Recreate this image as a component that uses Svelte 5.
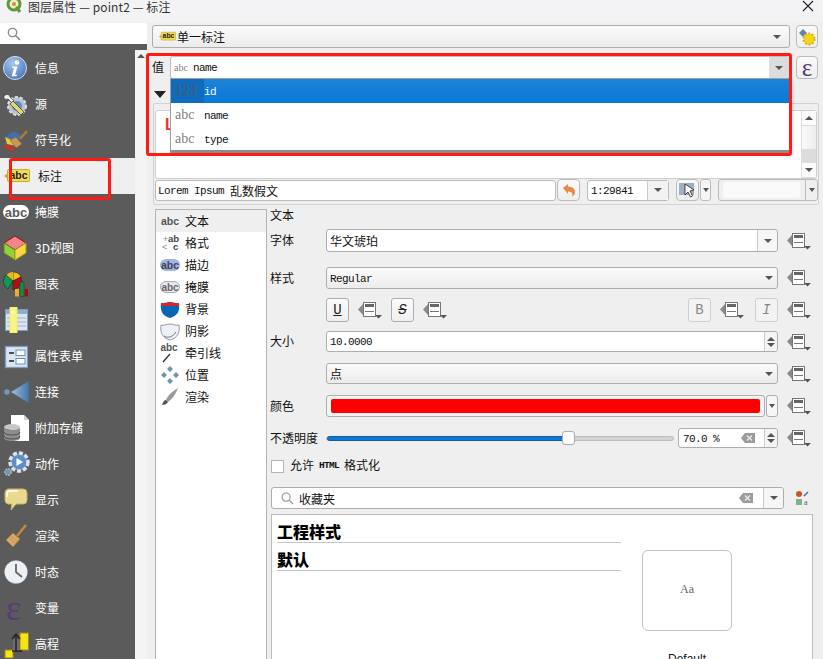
<script>
const nav = [
  ['信息','info'],['源','source'],['符号化','symbol'],['标注','label'],['掩膜','mask'],['3D视图','cube'],
  ['图表','chart'],['字段','fields'],['属性表单','form'],['连接','join'],['附加存储','store'],['动作','action'],
  ['显示','display'],['渲染','render'],['时态','clock'],['变量','var'],['高程','elev']
];
const icons = {
  info:`<svg width="26" height="26" viewBox="0 0 26 26"><defs><radialGradient id="ib" cx=".4" cy=".3" r=".8"><stop offset="0" stop-color="#a9c8ec"/><stop offset="1" stop-color="#3b70b5"/></radialGradient></defs><circle cx="13" cy="13" r="11.5" fill="url(#ib)" stroke="#cfdff2"/><circle cx="15" cy="7.5" r="2.3" fill="#fff"/><path d="M10.5 11.5h5l-2.4 8.2h2l-.6 1.6H9.600l2.400-8.200h-2z" fill="#fff"/></svg>`,
  source:`<svg width="26" height="26" viewBox="0 0 26 26"><circle cx="15" cy="15" r="9" fill="#b9c3cc" stroke="#d8dde2" stroke-width="2" stroke-dasharray="3 2"/><circle cx="15" cy="15" r="5" fill="#5b8ec4"/><path d="M2 5c3-3 6-1 6 1l4 4-2 2-4-4C4 9 1 8 2 5z" fill="#eee" stroke="#333" stroke-width=".7"/><path d="M11 10l11 11-3 3L8 13z" fill="#e8d36a" stroke="#333" stroke-width=".7"/></svg>`,
  symbol:`<svg width="28" height="26" viewBox="0 0 28 26"><path d="M3 10l9-6 9 6-9 4z" fill="#3f6fb0"/><path d="M3 10l9 4 2 5-9-2z" fill="#e8c93c"/><path d="M2 17l8 2 3 6-10-4z" fill="#c8342c"/><path d="M14 21l-6-8 6-3 6 7z" fill="#c89858" stroke="#7d5a2a" stroke-width=".6"/><path d="M18 12l7-8" stroke="#b07a30" stroke-width="2.400"/></svg>`,
  label:`<svg width="26" height="16" viewBox="0 0 26 16"><path d="M0 8l4-3v6z" fill="#c9a93a"/><rect x="3.500" y="1.500" width="22" height="12" rx="1" fill="#f2dc4c" stroke="#c9a93a"/><text x="14.500" y="11" text-anchor="middle" font-family="Liberation Sans" font-weight="700" font-size="10.500" fill="#222">abc</text></svg>`,
  mask:`<svg width="28" height="18" viewBox="0 0 28 18"><rect x="1" y="2" width="26" height="14" rx="7" fill="#fff"/><text x="14" y="13.500" text-anchor="middle" font-family="Liberation Sans" font-weight="700" font-size="13" fill="#5b5b5b">abc</text></svg>`,
  cube:`<svg width="26" height="28" viewBox="0 0 26 28"><path d="M13 2l11 7-11 7L2 9z" fill="#f0858a" stroke="#a01010"/><path d="M2 9l11 7v10L2 19z" fill="#93d13c" stroke="#5a8a10"/><path d="M24 9l-11 7v10l11-7z" fill="#f5d84a" stroke="#b89a10"/></svg>`,
  chart:`<svg width="26" height="26" viewBox="0 0 26 26"><path d="M11 10V1a8.500 8.500 0 0 1 8 5z" fill="#f2c422" stroke="#222" stroke-width=".6"/><path d="M11 10L4 5a8.500 8.500 0 0 1 7-4z" fill="#e8b820"/><path d="M11 10L4 4a9 9 0 0 0 2 14z" fill="#0c9a54" stroke="#222" stroke-width=".6"/><path d="M11 10l8-4a9 9 0 0 1-6 12l-2 1z" fill="#b01010" stroke="#222" stroke-width=".6"/><rect x="13" y="18" width="4" height="7.500" fill="#eab022"/><rect x="18" y="11" width="4" height="14.500" fill="#1a8a4a" stroke="#222" stroke-width=".4"/><rect x="22.500" y="18" width="3.500" height="7.500" fill="#a01010"/></svg>`,
  fields:`<svg width="26" height="26" viewBox="0 0 26 26"><rect x="3.500" y="2.500" width="22" height="21" fill="#dbe4ef" stroke="#7d9cc0"/><rect x="4" y="3" width="21" height="4" fill="#8fadcf"/><path d="M5 11h19M5 15h19M5 19h19" stroke="#9db5d0"/><rect x="8" y="0" width="7" height="26" fill="#f8f48c" stroke="#f4ee50"/><rect x="10" y="4" width="2" height="1.500" fill="#fff"/></svg>`,
  form:`<svg width="26" height="26" viewBox="0 0 26 26"><rect x="3.500" y="3.500" width="22" height="21" fill="#dbe4ef" stroke="#7d9cc0" stroke-width="1.300"/><rect x="14" y="7" width="9" height="5.500" fill="#fff" stroke="#6b8fb8"/><rect x="14" y="15.500" width="9" height="5.500" fill="#fff" stroke="#6b8fb8"/><path d="M7 10h5M7 18h5" stroke="#44505c" stroke-width="2"/></svg>`,
  join:`<svg width="28" height="26" viewBox="0 0 28 26"><defs><linearGradient id="jb" x1="0" x2="1"><stop offset="0" stop-color="#a4c0dd"/><stop offset="1" stop-color="#3f73ab"/></linearGradient></defs><circle cx="5" cy="13" r="2.800" fill="#6d95c0"/><path d="M9 13L27 2v22z" fill="url(#jb)"/></svg>`,
  store:`<svg width="28" height="28" viewBox="0 0 28 28"><path d="M9 1h13l5 5v21H9z" fill="#fff"/><path d="M22 1v5h5" fill="#cfcfcf"/><ellipse cx="10" cy="13" rx="8" ry="3" fill="#c7c7c7"/><path d="M2 13v11c0 4 16 4 16 0V13c0 4-16 4-16 0z" fill="#8d8d8d"/><path d="M2 18c0 4 16 4 16 0M2 22c0 4 16 4 16 0" stroke="#333" fill="none" stroke-width=".7"/></svg>`,
  action:`<svg width="28" height="26" viewBox="0 0 28 26"><circle cx="17" cy="11" r="9" fill="#5d8fc7" stroke="#e2e2e2" stroke-width="3.500" stroke-dasharray="4 2"/><path d="M14.500 7v8l6.500-4z" fill="#fff"/><circle cx="6" cy="21" r="3.300" fill="#6d95c0" stroke="#d4d4d4" stroke-dasharray="2 1"/></svg>`,
  display:`<svg width="26" height="24" viewBox="0 0 26 24"><path d="M6 1h15a4 4 0 0 1 4 4v7a4 4 0 0 1-4 4H14l-5 6 1-6H6a4 4 0 0 1-3-4V5a4 4 0 0 1 3-4z" fill="#ead98f" stroke="#c8b866"/><path d="M5 9V6a3 3 0 0 1 3-3h8" stroke="#fff" fill="none" stroke-width="1.500"/></svg>`,
  render:`<svg width="26" height="26" viewBox="0 0 26 26"><path d="M15 13l9-11" stroke="#c98a3c" stroke-width="2.400"/><path d="M4 17l7-7 7 6-7 8z" fill="#d8a86c" stroke="#a87838"/><path d="M7 15l7 6M9 13l7 6" stroke="#b98a4c" stroke-width=".7"/></svg>`,
  clock:`<svg width="26" height="26" viewBox="0 0 26 26"><circle cx="14" cy="13" r="11.500" fill="#eef1f4" stroke="#7fa3cf" stroke-dasharray="2 3"/><path d="M14 5v8l6 5" fill="none" stroke="#666" stroke-width="1.800"/></svg>`,
  var:`<span class="eps big">ε</span>`,
  elev:`<svg width="28" height="28" viewBox="0 0 28 28"><rect x="18" y="3" width="8.500" height="17" fill="#f7e318" stroke="#a08a10"/><rect x="3" y="20" width="8" height="8" fill="#f7e318" stroke="#a08a10"/><path d="M14 5v16M10 9l4-5 4 5M10 21h10" fill="none" stroke="#222" stroke-width="1.300"/><path d="M12 9v12M16 9v12" stroke="#888" stroke-width=".8"/></svg>`
};
const sections = [
  ['文本','text'],['格式','fmt'],['描边','buf'],['掩膜','mk'],['背景','bg'],['阴影','sh'],['牵引线','call'],['位置','pos'],['渲染','rend']
];
const sIcons = {
  text:`<svg width="20" height="14"><text x="10" y="11" text-anchor="middle" font-family="Liberation Sans" font-weight="700" font-size="10.500" fill="#555">abc</text></svg>`,
  fmt:`<svg width="20" height="18"><text x="3" y="8" font-family="Liberation Sans" font-size="9" fill="#888">+</text><text x="8" y="8" font-family="Liberation Sans" font-weight="700" font-size="9.500" fill="#444">ab</text><text x="2" y="16" font-family="Liberation Sans" font-size="9" fill="#888">&lt;</text><text x="13" y="16" font-family="Liberation Sans" font-weight="700" font-size="9.500" fill="#444">c</text></svg>`,
  buf:`<svg width="20" height="14"><rect y="1" width="20" height="12" rx="6" fill="#9db4ee"/><text x="10" y="11" text-anchor="middle" font-family="Liberation Sans" font-weight="700" font-size="10.500" fill="#444">abc</text></svg>`,
  mk:`<svg width="20" height="14"><rect x=".5" y="1.500" width="19" height="11" rx="5.500" fill="#e8e8ee" stroke="#aab"/><text x="10" y="11" text-anchor="middle" font-family="Liberation Sans" font-weight="700" font-size="10" fill="#666">abc</text></svg>`,
  bg:`<svg width="20" height="20" viewBox="0 0 20 20"><path d="M1 4c3 1 6-1 9-1s6 2 9 1c1 7-1 13-9 15C2 17 0 11 1 4z" fill="#0a66b4"/><path d="M1 4c3 1 6-1 9-1s6 2 9 1l0 3H1z" fill="#d8242c"/></svg>`,
  sh:`<svg width="20" height="20" viewBox="0 0 20 20"><path d="M1 4c3 1 6-1 9-1s6 2 9 1c1 7-1 13-9 15C2 17 0 11 1 4z" fill="#eef0fa" stroke="#9a9a9a"/><path d="M4 15c3 2 8 2 12-4" stroke="#777" fill="none"/></svg>`,
  call:`<svg width="20" height="22"><text x="9" y="9" text-anchor="middle" font-family="Liberation Sans" font-weight="700" font-size="10" fill="#555">abc</text><path d="M3 20l7-8" stroke="#333" stroke-width="1.300"/></svg>`,
  pos:`<svg width="20" height="20" viewBox="0 0 20 20" fill="#6f93ac"><path d="M10 1l3 3-3 3-3-3zM10 13l3 3-3 3-3-3zM1 10l3-3 3 3-3 3zM13 10l3-3 3 3-3 3z"/></svg>`,
  rend:`<svg width="20" height="20" viewBox="0 0 20 20"><path d="M18 1C13 4 8 8 6 13l2 2C12 12 16 7 18 1z" fill="#9a9a9a"/><path d="M6 13c-2 0-3 2-4 5 3 0 5-1 6-3z" fill="#555"/></svg>`
};
</script>

{#snippet dd()}
  <svg class="dd" width="24" height="18" viewBox="0 0 24 18">
    <path d="M5 3v11L0 8.500z" fill="#8a8a8a"/>
    <rect x="5.500" y="1.500" width="12" height="14" fill="#fff" stroke="#777"/>
    <rect x="7" y="3" width="9" height="3" fill="#666"/>
    <path d="M7 10.500h9" stroke="#777"/>
    <path d="M17 14h7l-3.500 3.500z" fill="#555"/>
  </svg>
{/snippet}
{#snippet arrow()}<i class="arrow"></i>{/snippet}
{#snippet spin()}
  <span class="spin"><i class="up"></i><i class="down"></i></span>
{/snippet}
{#snippet clear()}
  <svg class="clear" width="14" height="10" viewBox="0 0 14 10"><path d="M4 0h10v10H4L0 5z" fill="#9c9c9c"/><path d="M6 2.500l5 5M11 2.500l-5 5" stroke="#eee" stroke-width="1.200"/></svg>
{/snippet}

<div class="window">
  <header class="title">
    <svg width="18" height="14" viewBox="0 0 18 14"><circle cx="9" cy="4" r="6" fill="#f0eecb" stroke="#5c9a3c" stroke-width="3"/><circle cx="9" cy="4" r="2" fill="#e08a2c"/><path d="M11 7l4 5" stroke="#5c9a3c" stroke-width="3"/></svg>
    <span class="title-text">图层属性 — point2 — 标注</span>
    <svg class="close" width="12" height="12" viewBox="0 0 12 12"><path d="M1 1l10 10M11 1L1 11" stroke="#222" stroke-width="1.100"/></svg>
  </header>

  <div class="body">
    <aside>
      <div class="search">
        <svg width="14" height="14" viewBox="0 0 14 14"><circle cx="5.500" cy="5.500" r="4.200" fill="none" stroke="#888" stroke-width="1.300"/><path d="M8.500 8.500l4.500 4.500" stroke="#888" stroke-width="1.500"/></svg>
      </div>
      <div class="strip"></div>
      <div class="navwrap">
        <nav>
          {#each nav as [name, icon]}
            <div class="nav-item" class:active={icon === 'label'}>
              <span class="nav-icon">{@html icons[icon]}</span>
              <span class="nav-label">{name}</span>
            </div>
          {/each}
        </nav>
        <div class="vscroll"><i class="up"></i></div>
      </div>
    </aside>

    <main>
      <div class="row1">
        <div class="combo grad wide">
          {@html icons.label.replace('width="26" height="16"','width="17" height="11"')}
          <span class="txt">单一标注</span>
          {@render arrow()}
        </div>
        <button class="tool" aria-label="settings">
          <svg width="18" height="18" viewBox="0 0 18 18"><path d="M5 1l4 4-4 4-4-4z" fill="#5f86a8"/><circle cx="11" cy="11" r="5.500" fill="#f3d520" stroke="#d8b410" stroke-width="2" stroke-dasharray="2 1.500"/></svg>
        </button>
      </div>

      <div class="row2">
        <span class="zhi">值</span>
        <div class="combo value">
          <span class="abc small">abc</span><span class="mono nm">name</span>
          <span class="valarrow">{@render arrow()}</span>
        </div>
        <button class="tool" aria-label="expression"><span class="eps">ε</span></button>
      </div>

      <div class="row3"><i class="collapse"></i></div>

      <section class="preview">
        <div class="pvbox">
          <div class="pvtext"><span class="redtext">Lorem</span></div>
          <div class="pvscroll">
            <span class="sb"><i class="up"></i></span>
            <span class="sbtrack"></span>
            <span class="sbthumb"></span>
            <span class="sb"><i class="down"></i></span>
          </div>
        </div>
        <div class="pvrow">
          <div class="input lorem"><span class="mono">Lorem Ipsum</span><span class="cjk gap">乱数假文</span></div>
          <button class="tool small undo" aria-label="reset">
            <svg width="14" height="14" viewBox="0 0 14 14"><path d="M1 5l5-4v2.500c5 0 7 3 7 5.500 0 2-1 3.500-3 4.500 1-2 .5-5-4-5V11z" fill="#e98a4a"/></svg>
          </button>
          <div class="scale"><span class="mono">1:29841</span><span class="scalearrow">{@render arrow()}</span></div>
          <button class="tool small cursor" aria-label="pick">
            <svg width="18" height="16" viewBox="0 0 18 16"><rect x="0" y="1" width="15" height="12" fill="#9db0c4"/><path d="M6 2l9 6-4 1 2.500 5-2 1-2.500-5-3 3z" fill="#fff" stroke="#222" stroke-width=".8"/></svg>
          </button>
          <span class="mini">{@render arrow()}</span>
          <div class="blank"><span></span><em>{@render arrow()}</em></div>
        </div>
      </section>

      <div class="split">
        <div class="list">
          {#each sections as [name, icon], i}
            <div class="list-item" class:sel={i === 0}>
              <span class="list-icon">{@html sIcons[icon]}</span><span class="list-label">{name}</span>
            </div>
          {/each}
        </div>

        <div class="panel">
          <div class="heading">文本</div>
          <div class="f h23 m6"><label>字体</label><div class="combo white field"><span class="txt">华文琥珀</span><span class="endarrow">{@render arrow()}</span></div>{@render dd()}</div>
          <div class="f h22 m15"><label>样式</label><div class="combo grad field"><span class="mono">Regular</span>{@render arrow()}</div>{@render dd()}</div>
          <div class="f h24 m9"><label></label>
            <button class="fmt"><u class="mono2">U</u></button>{@render dd()}
            <button class="fmt s"><s class="mono2">S</s></button>{@render dd()}
            <span class="grow"></span>
            <button class="fmt off"><span class="mono2">B</span></button>{@render dd()}
            <button class="fmt off it"><em class="mono2">I</em></button>{@render dd()}
          </div>
          <div class="f h21 m9"><label>大小</label><div class="combo white field sp"><span class="mono">10.0000</span>{@render spin()}</div>{@render dd()}</div>
          <div class="f h21 m11"><label></label><div class="combo grad field"><span class="txt">点</span>{@render arrow()}</div>{@render dd()}</div>
          <div class="f h22 m11"><label>颜色</label><div class="field colorwrap"><div class="colorbtn"><span class="red"></span></div><span class="colorarrow">{@render arrow()}</span></div>{@render dd()}</div>
          <div class="f h20 m11"><label>不透明度</label>
            <div class="field op">
              <div class="slider"><span class="fill"></span><span class="thumb"></span></div>
              <div class="combo white opinput"><span class="mono">70.0 %</span><span class="grow"></span>{@render clear()}{@render spin()}</div>
            </div>{@render dd()}</div>
          <div class="check"><span class="box"></span><span class="cjk">允许</span><span class="mono html">HTML</span><span class="cjk">格式化</span></div>
          <div class="f h22 searchrow">
            <div class="combo white sfield">
              <svg width="13" height="13" viewBox="0 0 14 14"><circle cx="5.500" cy="5.500" r="4.400" fill="none" stroke="#999" stroke-width="1.200"/><path d="M8.500 8.500l4.500 4.500" stroke="#999" stroke-width="1.400"/></svg>
              <span class="txt">收藏夹</span><span class="grow"></span>{@render clear()}
              <span class="endarrow">{@render arrow()}</span>
            </div>
            <svg class="styleicon" width="14" height="16" viewBox="0 0 14 16"><circle cx="4" cy="4" r="3" fill="#c8562a"/><rect x="1" y="9" width="6" height="6" fill="#7fb08a"/><path d="M9 6l4-4" stroke="#4a6f9a" stroke-width="1.500"/><text x="9" y="15" font-family="Liberation Serif" font-size="8" fill="#555">a</text></svg>
          </div>
          <div class="gallery">
            <div class="groups">
              <h3>工程样式</h3>
              <h3 class="second">默认</h3>
            </div>
            <div class="card-col">
              <div class="card">Aa</div>
              <div class="cardname">Default</div>
            </div>
          </div>
        </div>
      </div>
    </main>
  </div>

  <div class="popup">
    <div class="opt sel"><span class="abc cell">123</span><span class="mono">id</span></div>
    <div class="opt"><span class="abc">abc</span><span class="mono">name</span></div>
    <div class="opt"><span class="abc">abc</span><span class="mono">type</span></div>
  </div>
  <div class="mark mark-a"></div>
  <div class="mark mark-b"></div>
</div>

<style>
:global(body){margin:0;background:#efefef;}
.window{position:relative;width:823px;height:659px;overflow:hidden;background:#efefef;font-family:"Noto Sans CJK SC","Liberation Sans",sans-serif;font-size:12px;color:#111;}
i,em{font-style:normal;}
.title{height:22px;box-sizing:border-box;background:#f3f3f5;display:flex;align-items:flex-start;padding:0 0 0 5px;gap:5px;overflow:hidden;}
.title-text{line-height:16px;height:16px;color:#333;font-size:12px;letter-spacing:.1px;margin-top:-1px;}
.close{margin:0 9px 0 auto;}
.body{display:flex;height:637px;}
aside{width:147px;flex:none;display:flex;flex-direction:column;}
.search{height:21px;margin-top:1px;background:#fff;display:flex;align-items:center;padding-left:7px;border-radius:2px;}
.strip{height:6px;background:#5b5b5b;}
.navwrap{flex:1;display:flex;min-height:0;}
nav{width:135px;background:#5b5b5b;overflow:hidden;flex:none;}
.vscroll{flex:1;background:#f4f4f4;display:flex;justify-content:center;padding-top:4px;box-sizing:border-box;}
.nav-item{height:36px;display:flex;align-items:center;color:#fff;padding-left:2px;}
.nav-item.active{background:#efefef;color:#111;}
.nav-icon{width:33px;flex:none;display:flex;align-items:center;}
.nav-icon :global(svg){display:block;}
.nav-label{font-size:12px;margin-top:-2px;}
.active .nav-label{margin-left:3px;}
.active .nav-icon{padding-left:2px;box-sizing:border-box;}
.nav-icon :global(.eps.big){font-family:"Liberation Serif",serif;font-size:36px;color:#5a3a78;line-height:26px;margin-left:4px;}
main{flex:1;min-width:0;padding:3px 5px 0 5px;display:flex;flex-direction:column;}
.up,.down{display:block;width:0;height:0;border-left:4px solid transparent;border-right:4px solid transparent;}
.up{border-bottom:4px solid #555;}
.down{border-top:4px solid #555;}
.row1{display:flex;gap:6px;height:23px;}
.combo{box-sizing:border-box;border:1px solid #adadad;border-radius:3px;display:flex;align-items:center;position:relative;}
.grad{background:linear-gradient(#fbfbfb,#ececec);}
.white{background:#fff;}
.wide{width:638px;padding:0 8px 0 6px;gap:1px;}
.wide .arrow{margin-left:auto;}
.txt{font-size:12px;color:#111;}
.arrow{display:block;width:0;height:0;border-left:4.500px solid transparent;border-right:4.500px solid transparent;border-top:4.500px solid #555;}
.tool{box-sizing:border-box;width:22px;height:23px;padding:0;border:1px solid #bbb;border-radius:4px;background:linear-gradient(#fafafa,#efefef);display:flex;align-items:center;justify-content:center;}
.eps{font-family:"Liberation Serif",serif;font-size:25px;color:#5a3a78;line-height:20px;}
.row2{display:flex;height:23px;margin-top:8px;align-items:center;}
.zhi{width:18px;font-size:12px;margin-top:-2px;}
.value{width:620px;height:23px;background:#fff;border-color:#bdbdbd;padding-left:3px;margin-right:6px;}
.abc{font-family:"Liberation Serif",serif;color:#808080;font-size:13px;}
.abc.small{font-size:10px;margin-right:5px;}
.mono{font-family:"Liberation Mono",monospace;font-size:11px;letter-spacing:-.6px;white-space:pre;color:#111;}
.value .mono,.field .mono{padding-top:1px;}
.cjk{font-size:12px;}
.cjk.gap{margin-left:6px;}
.valarrow{margin-left:auto;width:20px;height:21px;background:#dcdcdc;display:flex;align-items:center;justify-content:center;}
.row3{height:24px;display:flex;align-items:flex-start;padding-top:12px;box-sizing:border-box;}
.collapse{display:block;width:0;height:0;border-left:6px solid transparent;border-right:6px solid transparent;border-top:7px solid #222;margin-left:2px;}
.preview{box-sizing:border-box;height:102px;width:666px;margin-left:1px;border:1px solid #d2d2d2;border-radius:2px;padding:6px 0 0 1px;}
.pvbox{display:flex;height:69px;width:662px;box-sizing:border-box;border:1px solid #cfcfcf;border-radius:3px;background:#fff;}
.pvtext{flex:1;padding:5px 0 0 9px;overflow:hidden;}
.redtext{font-family:"Liberation Sans",sans-serif;font-weight:700;font-size:16px;color:#f03030;}
.pvscroll{width:14px;display:flex;flex-direction:column;border-left:1px solid #ddd;background:linear-gradient(90deg,#fafafa,#ececec);}
.sb{height:14px;display:flex;align-items:center;justify-content:center;background:#fbfbfb;border-bottom:1px solid #ddd;}
.sbtrack{flex:1;}
.sbthumb{height:14px;background:#dcdcdc;}
.pvrow{display:flex;align-items:center;margin-top:0;height:22px;}
.pvrow .mono{padding-top:2px;}
.input{box-sizing:border-box;width:401px;height:21px;background:#fff;border:1px solid #bbb;border-radius:3px;display:flex;align-items:center;padding-left:2px;}
.tool.small{height:22px;width:23px;}
.undo{margin-left:1px;}
.scale{box-sizing:border-box;width:82px;height:21px;margin-left:7px;background:#fff;border:1px solid #bbb;border-radius:3px;display:flex;align-items:center;padding-left:3px;}
.scalearrow{margin-left:auto;width:20px;height:19px;background:#f2f2f2;border-left:1px solid #ccc;display:flex;align-items:center;justify-content:center;}
.cursor{margin-left:7px;}
.mini{box-sizing:border-box;width:11px;height:22px;border:1px solid #bbb;border-radius:3px;display:flex;align-items:center;justify-content:center;margin-left:1px;background:#f6f6f6;}
.mini .arrow,.blank .arrow{border-width:4px 3.500px 0;}
.blank{box-sizing:border-box;margin-left:7px;width:100px;height:22px;border:1px solid #bbb;border-radius:3px;display:flex;align-items:center;background:#efefef;position:relative;}
.blank span{display:block;margin-left:4px;width:77px;height:16px;background:#fafafa;border-radius:2px;}
.blank em{margin-left:auto;width:11px;height:100%;border-left:1px solid #bbb;display:flex;align-items:center;justify-content:center;}
.split{display:flex;margin-top:4px;margin-left:3px;flex:1;min-height:0;}
.list{box-sizing:border-box;width:112px;background:#fff;border:1px solid #b4b4b4;border-bottom:none;flex:none;padding:0;}
.list-item{height:22px;display:flex;align-items:center;font-size:12px;}
.list-item.sel{background:#efefef;}
.list-icon{width:29px;padding-left:4px;box-sizing:border-box;display:flex;align-items:center;flex:none;height:22px;}
.list-icon :global(svg){display:block;}
.list-label{margin-top:-2px;}
.panel{flex:1;padding-left:3px;min-width:0;margin-top:-1px;}
.heading{height:15px;line-height:13px;font-size:12px;}
.f{display:flex;align-items:center;width:541px;}
.f label{width:56px;flex:none;font-size:12px;margin-top:-2px;}
.h23{height:23px}.h22{height:22px}.h24{height:24px}.h21{height:21px}.h20{height:20px}
.m6{margin-top:6px}.m15{margin-top:15px}.m9{margin-top:9px}.m11{margin-top:11px}
.dd{flex:none;margin-left:9px;}
.field{width:452px;height:100%;flex:none;}
.combo.field{padding:0 4px 0 3px;justify-content:space-between;}
.endarrow{width:20px;height:100%;border-left:1px solid #ccc;display:flex;align-items:center;justify-content:center;box-sizing:border-box;background:#f6f6f6;margin-right:-4px;border-radius:0 3px 3px 0;}
.spin{width:13px;height:100%;border-left:1px solid #ccc;display:flex;flex-direction:column;align-items:center;justify-content:center;gap:2px;background:#f4f4f4;box-sizing:border-box;flex:none;border-radius:0 3px 3px 0;}
.sp{padding-right:0 !important;}
.fmt{box-sizing:border-box;width:23px;height:24px;padding:0;border:1px solid #adadad;border-radius:3px;background:linear-gradient(#fbfbfb,#efefef);display:flex;align-items:center;justify-content:center;color:#222;}
.fmt.s{margin-left:9px;}
.fmt.it{margin-left:11px;}
.fmt.off{border-color:#cfcfcf;color:#888;background:#f3f3f3;}
.mono2{font-family:"Liberation Mono",monospace;font-size:14px;}
.it .mono2{font-style:italic;}
.s .mono2{font-style:italic;}
.grow{flex:1;}
.colorwrap{display:flex;gap:1px;}
.colorbtn{box-sizing:border-box;flex:1;border:1px solid #adadad;border-radius:3px;background:#f4f4f4;padding:3px 4px;display:flex;}
.red{flex:1;background:#ff0000;border-radius:2px;}
.colorarrow{box-sizing:border-box;width:12px;border:1px solid #adadad;border-radius:3px;background:#f6f6f6;display:flex;align-items:center;justify-content:center;}
.colorarrow .arrow{border-width:4px 3.500px 0;}
.op{display:flex;align-items:center;}
.slider{position:relative;width:348px;height:5px;border-radius:3px;background:#d4d4d4;border:1px solid #bdbdbd;box-sizing:border-box;flex:none;}
.fill{position:absolute;left:0;top:-1px;height:5px;width:241px;background:#0f78d4;border-radius:3px;border:1px solid #0a5ea8;box-sizing:border-box;}
.thumb{position:absolute;left:235px;top:-6px;box-sizing:border-box;width:13px;height:14px;background:#fbfbfb;border:1px solid #adadad;border-radius:3px;}
.opinput{box-sizing:border-box;width:100px;height:20px;margin-left:4px;padding-left:4px;gap:0;}
.opinput .clear{margin-right:9px;}
.check{display:flex;align-items:center;height:14px;margin-top:11px;font-size:12px;}
.check .cjk{margin-top:-4px;}
.box{box-sizing:border-box;width:13px;height:13px;background:#fff;border:1px solid #b4b4b4;margin:0 6px 0 1px;}
.html{margin:-2px 5px 0;font-size:9.500px;letter-spacing:-.7px;font-weight:700;}
.searchrow{margin-top:14px;margin-left:1px;}
.sfield{box-sizing:border-box;width:513px;height:22px;padding:0 0 0 9px;gap:5px;}
.sfield .clear{margin-right:3px;}
.sfield .endarrow{margin-right:0;margin-left:2px;}
.styleicon{margin-left:11px;}
.gallery{box-sizing:border-box;margin:5px 0 0 1px;width:542px;height:200px;background:#fff;border:1px solid #bdbdbd;display:flex;}
.groups{width:349px;padding-left:5px;box-sizing:border-box;flex:none;}
h3{margin:7px 0 0;font-size:16px;line-height:19px;height:20px;font-weight:900;border-bottom:1px solid #c8c8c8;color:#000;}
h3.second{margin-top:7px;}
.card-col{margin-left:21px;width:90px;padding-top:35px;}
.card{box-sizing:border-box;width:90px;height:81px;border:1px solid #c4c4c4;border-radius:6px;display:flex;align-items:center;justify-content:center;font-family:"Liberation Serif",serif;font-size:12px;color:#666;padding-bottom:3px;}
.cardname{text-align:center;font-family:"Liberation Sans",sans-serif;font-size:12px;margin-top:21px;line-height:14px;}
.popup{position:absolute;left:170px;top:78px;width:621px;height:75px;box-sizing:border-box;background:#fff;border:1px solid #a0a0a0;border-bottom:3px solid #8c8c8c;border-right:none;box-shadow:2px 2px 3px rgba(0,0,0,.15);}
.opt{height:24px;display:flex;align-items:center;padding-left:4px;}
.opt .abc{width:29px;flex:none;font-size:14px;}
.opt .mono{padding-top:1px;}
.opt.sel{background:linear-gradient(#1b83d9,#0a78d7);}
.opt.sel .abc{color:#555;background:#0f6cbd;height:100%;display:flex;align-items:center;margin-left:-4px;padding-left:4px;}
.opt.sel .mono{color:#fff;}
.mark{position:absolute;border:3px solid #ff1a14;border-radius:3px;box-sizing:border-box;pointer-events:none;}
.mark-a{left:146px;top:53px;width:646px;height:103px;}
.mark-b{left:9px;top:158px;width:102px;height:42px;}
</style>
